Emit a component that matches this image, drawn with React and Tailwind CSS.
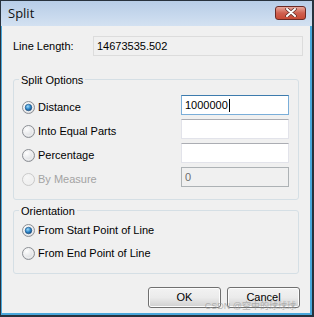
import React from "react";

const ui = { fontFamily: '"Liberation Sans", Arial, sans-serif' };

function Radio({ checked = false, disabled = false }) {
      const ring = disabled ? "#c9c9c9" : "#8c8f94";
      return (
            <svg width="13" height="13" viewBox="0 0 13 13" className="shrink-0">
                  <defs>
                        <radialGradient id={`rf-${checked}-${disabled}`} cx="0.35" cy="0.3" r="0.8">
                              <stop offset="0" stopColor={disabled ? "#f7f7f7" : "#ffffff"} />
                              <stop offset="1" stopColor={disabled ? "#ebebeb" : "#d3d5d9"} />
                        </radialGradient>
                        <radialGradient id="rdot" cx="0.4" cy="0.35" r="0.7">
                              <stop offset="0" stopColor="#9fdcfb" />
                              <stop offset="0.55" stopColor="#2d86c9" />
                              <stop offset="1" stopColor="#13467a" />
                        </radialGradient>
                  </defs>
                  <circle cx="6.5" cy="6.5" r="6" fill={`url(#rf-${checked}-${disabled})`} stroke={ring} strokeWidth="1" />
                  <circle cx="6.5" cy="6.5" r="4.3" fill="none" stroke={disabled ? "#f2f2f2" : "#f4f4f4"} strokeWidth="0.8" />
                  {checked && <circle cx="6.5" cy="6.5" r="3.3" fill="url(#rdot)" stroke="#1b4f80" strokeWidth="0.6" />}
            </svg>
      );
}

function Option({ label, checked, disabled }) {
      return (
            <div className="flex items-center h-[20px]">
                  <Radio checked={checked} disabled={disabled} />
                  <span className={`ml-[3px] text-[11px] ${disabled ? "text-[#a3a3a3]" : "text-black"}`}>{label}</span>
            </div>
      );
}

function Field({ value, focused, disabled }) {
      const border = focused
            ? "border-[#7aaed9] border-t-[#3d7bad]"
            : disabled
                  ? "border-[#adb2b5]"
                  : "border-[#e2e3ea] border-t-[#abadb3]";
      return (
            <div className={`w-[108px] h-[20px] border ${border} ${disabled ? "bg-[#f0f0f0] text-[#6d6d6d]" : "bg-white text-black"} flex items-center px-[3px] text-[11px]`}>
                  {value}
                  {focused && <span className="ml-[1px] w-px h-[13px] bg-black" />}
            </div>
      );
}

function Group({ title, className, children }) {
      return (
            <div className={`relative mx-[11px] border border-[#d5dfe5] rounded-[3px] ${className}`}>
                  <span className="absolute left-[5px] top-0 -translate-y-1/2 px-[2px] bg-[#f0f0f0] text-[11px] leading-[13px] text-black">{title}</span>
                  {children}
            </div>
      );
}

function Button({ children }) {
      return (
            <div className="w-[73px] h-[21px] rounded-[3px] border border-[#707070] bg-gradient-to-b from-[#f2f2f2] via-[#ebebeb] to-[#cfcfcf] shadow-[inset_0_0_0_1px_#fcfcfc] flex items-center justify-center text-[11px] text-black">
                  {children}
            </div>
      );
}

export default function App() {
      return (
            <div className="w-[314px] h-[317px] border-l border-t border-r-2 border-b-2 border-[#27323d] bg-[#4aa8dc] flex flex-col overflow-hidden" style={ui}>
                  <div className="h-[25px] shrink-0 bg-gradient-to-b from-[#b7cde7] to-[#d3e1f1] flex items-center pl-[7px] pr-[6px]">
                        <span className="text-[13px] text-[#111] flex-1" style={{ fontFamily: '"Open Sans", "Noto Sans", sans-serif' }}>Split</span>
                        <div className="w-[31px] h-[14px] -mt-[2px] rounded-[3px] border border-[#6b2a25] bg-gradient-to-b from-[#e8a89c] via-[#cf6050] to-[#c84a35] flex items-center justify-center">
                              <svg width="12" height="9" viewBox="0 0 12 9">
                                    <path d="M2 1 L10 8 M10 1 L2 8" stroke="#5a2a26" strokeWidth="3.4" strokeLinecap="round" />
                                    <path d="M2 1 L10 8 M10 1 L2 8" stroke="#ffffff" strokeWidth="2" strokeLinecap="round" />
                              </svg>
                        </div>
                  </div>

                  <div className="flex-1 ml-px mr-[2px] mb-[2px] bg-[#f0f0f0] flex flex-col">
                        <div className="flex items-center mt-[10px] pl-[11px] pr-[7px]">
                              <span className="w-[80px] text-[11px] text-black">Line Length:</span>
                              <div className="flex-1 h-[20px] border border-[#dcdcdc] bg-[#f0f0f0] flex items-center px-[3px] text-[11px] text-black">14673535.502</div>
                        </div>

                        <Group title="Split Options" className="mt-[23px] h-[121px]">
                              <div className="flex items-start justify-between pl-[8px] pr-[9px] pt-[15px]">
                                    <div className="flex flex-col gap-[4px] pt-[2px]">
                                          <Option label="Distance" checked />
                                          <Option label="Into Equal Parts" />
                                          <Option label="Percentage" />
                                          <Option label="By Measure" disabled />
                                    </div>
                                    <div className="flex flex-col gap-[4px]">
                                          <Field value="1000000" focused />
                                          <Field value="" />
                                          <Field value="" />
                                          <Field value="0" disabled />
                                    </div>
                              </div>
                        </Group>

                        <Group title="Orientation" className="mt-[10px] h-[64px]">
                              <div className="flex flex-col gap-[3px] pl-[8px] pt-[9px]">
                                    <Option label="From Start Point of Line" checked />
                                    <Option label="From End Point of Line" />
                              </div>
                        </Group>

                        <div className="relative flex justify-end gap-[6px] mt-[13px] pr-[10px]">
                              <Button>OK</Button>
                              <Button>Cancel</Button>
                              <span className="absolute right-[14px] top-[14px] text-[9px] leading-[10px] text-[#9a9a9a]/70" style={{ fontFamily: '"Liberation Sans", "Noto Sans CJK SC", sans-serif' }}>CSDN @空中的球球球</span>
                        </div>
                  </div>
            </div>
      );
}
